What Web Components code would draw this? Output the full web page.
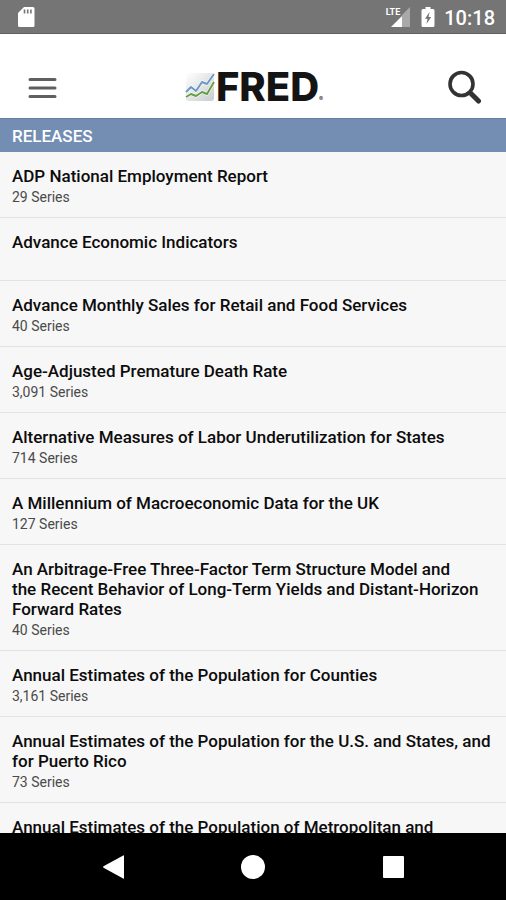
<!DOCTYPE html>
<html lang="en">
<head>
<meta charset="utf-8">
<meta name="viewport" content="width=device-width, initial-scale=1">
<title>FRED - Releases</title>
<style>
  body {
    margin: 0;
    font-family: Roboto, sans-serif;
    background: #fff;
  }
</style>
</head>
<body>
<fred-app></fred-app>

<script>
const RELEASES = [
  ["ADP National Employment Report", "29 Series"],
  ["Advance Economic Indicators", ""],
  ["Advance Monthly Sales for Retail and Food Services", "40 Series"],
  ["Age-Adjusted Premature Death Rate", "3,091 Series"],
  ["Alternative Measures of Labor Underutilization for States", "714 Series"],
  ["A Millennium of Macroeconomic Data for the UK", "127 Series"],
  ["An Arbitrage-Free Three-Factor Term Structure Model and the&nbsp;Recent Behavior of Long-Term Yields and Distant-Horizon Forward Rates", "40 Series"],
  ["Annual Estimates of the Population for Counties", "3,161 Series"],
  ["Annual Estimates of the Population for the U.S. and States, and for Puerto Rico", "73 Series"],
  ["Annual Estimates of the Population of Metropolitan and", ""]
];

class StatusBar extends HTMLElement {
  constructor() {
    super();
    this.attachShadow({ mode: "open" });
    this.shadowRoot.innerHTML = `
      <style>
        :host {
          display: flex;
          align-items: center;
          justify-content: space-between;
          height: 34px;
          padding: 0 11px 0 17px;
          box-sizing: border-box;
          background: #757575;
          border-bottom: 1px solid #5f5f5f;
          color: #fff;
        }
        svg { display: block; }
        .right { display: flex; align-items: center; }
        .signal { display: flex; align-items: flex-start; height: 20px; }
        .lte { font-size: 9px; line-height: 10px; font-weight: 700; }
        .signal svg { margin-left: -10px; }
        .battery { margin: 0 9px 0 11px; }
        time { font-size: 20px; line-height: 24px; font-weight: 500; padding-top: 2px; }
      </style>
      <svg width="18" height="22" viewBox="0 0 18 22" aria-hidden="true">
        <path fill="#fff" d="M7 1h9a1.500 1.500 0 0 1 1.500 1.500v17a1.500 1.500 0 0 1-1.500 1.500H2.500A1.500 1.500 0 0 1 1 19.500V7z"/>
        <path stroke="#757575" stroke-width="1.600" d="M7.500 3.500v4M10.700 3.500v4M13.900 3.500v4"/>
      </svg>
      <div class="right">
        <div class="signal">
          <span class="lte">LTE</span>
          <svg width="20" height="20" viewBox="0 0 20 20" aria-hidden="true">
            <path fill="#a9a9a9" d="M20 0v20H12V8z"/>
            <path fill="#fff" d="M12 9v11H1L11 10z"/>
          </svg>
        </div>
        <svg class="battery" width="14" height="22" viewBox="0 0 14 22" aria-hidden="true">
          <path fill="#fff" d="M4.500 1h5v2H12a1.500 1.500 0 0 1 1.500 1.500v15A1.500 1.500 0 0 1 12 21H2a1.500 1.500 0 0 1-1.500-1.500v-15A1.500 1.500 0 0 1 2 3h2.500z"/>
          <path fill="#757575" d="M8.500 6L4 12.700h2.500L5.500 18l4.700-7H7.600z"/>
        </svg>
        <time>10:18</time>
      </div>`;
  }
}

class FredLogo extends HTMLElement {
  constructor() {
    super();
    this.attachShadow({ mode: "open" });
    this.shadowRoot.innerHTML = `
      <style>
        :host { display: flex; align-items: center; }
        svg { display: block; margin-right: 1px; }
        .name { font: 800 40px/30px Inter, sans-serif; color: #141414; }
        .mark { align-self: flex-end; font: 6px/6px Inter, sans-serif; color: #222; }
      </style>
      <svg width="30" height="30" viewBox="0 0 30 30" aria-hidden="true">
        <defs>
          <linearGradient id="sheen" x1="0" y1="0" x2="1" y2="1">
            <stop offset="0" stop-color="#fff"/>
            <stop offset="1" stop-color="#c9cbce"/>
          </linearGradient>
        </defs>
        <rect x="1" y="1" width="28" height="28" rx="3" fill="url(#sheen)"/>
        <g fill="none" stroke-width="2" stroke-linejoin="round">
          <path stroke="#fff" stroke-width="3" d="M1 20l5-5 5 4 6-9 5 2 7-10"/>
          <path stroke="#6b97c2" d="M1 20l5-5 5 4 6-9 5 2 7-10"/>
          <path stroke="#fff" stroke-width="3" d="M1 25l5-3 5 2 6-4 5 2 7-12"/>
          <path stroke="#649e45" d="M1 25l5-3 5 2 6-4 5 2 7-12"/>
        </g>
      </svg>
      <span class="name">FRED</span><span class="mark">®</span>`;
  }
}

class AppHeader extends HTMLElement {
  constructor() {
    super();
    this.attachShadow({ mode: "open" });
    this.shadowRoot.innerHTML = `
      <style>
        :host {
          display: grid;
          grid-template-columns: 1fr auto 1fr;
          align-items: center;
          padding: 30px 24px 8px 26px;
          background: #fff;
        }
        button {
          display: block;
          border: 0;
          padding: 0;
          background: none;
          cursor: pointer;
        }
        .search { justify-self: end; }
        svg { display: block; }
      </style>
      <button type="button" aria-label="Menu">
        <svg width="32" height="46" viewBox="0 0 32 46">
          <path stroke="#606060" stroke-width="3" stroke-linecap="round" d="M4 15.500h25M4 24h25M4 32.500h25"/>
        </svg>
      </button>
      <slot></slot>
      <button type="button" class="search" aria-label="Search">
        <svg width="36" height="46" viewBox="0 0 36 46">
          <circle cx="15.500" cy="20" r="11.500" fill="none" stroke="#333" stroke-width="3.600"/>
          <path stroke="#333" stroke-width="5" stroke-linecap="round" d="M25.500 30l7 7"/>
          <path stroke="#333" stroke-width="3" d="M22.500 28l4 4"/>
        </svg>
      </button>`;
  }
}

class ReleaseItem extends HTMLElement {
  constructor() {
    super();
    this.attachShadow({ mode: "open" });
    this.shadowRoot.innerHTML = `
      <style>
        :host { display: block; border-bottom: 1px solid #e3e3e3; }
        a {
          display: block;
          min-height: 37px;
          padding: 14px 12px 11px;
          color: #0c0c0c;
          text-decoration: none;
        }
        .title { font-size: 17px; line-height: 20px; font-weight: 500; }
        ::slotted([slot=count]) {
          display: block;
          margin-top: 2px;
          font-size: 14px;
          line-height: 18px;
          color: #4a4a4a;
        }
      </style>
      <a href="#">
        <div class="title"><slot></slot></div>
        <slot name="count"></slot>
      </a>`;
  }
}

class ReleaseList extends HTMLElement {
  constructor() {
    super();
    this.attachShadow({ mode: "open" });
    this.shadowRoot.innerHTML = `
      <style>
        :host {
          display: flex;
          flex-direction: column;
          flex: 1;
          min-height: 0;
          background: #f7f7f7;
        }
        h2 {
          flex: none;
          margin: 0;
          padding: 8px 12px 6px;
          font-size: 17px;
          line-height: 20px;
          font-weight: 500;
          color: #fff;
          background: #738eb2;
          box-shadow: inset 0 1px #68809f;
        }
        .items {
          flex: 1;
          min-height: 0;
          overflow-y: auto;
          scrollbar-width: none;
        }
      </style>
      <h2><slot></slot></h2>
      <div class="items" role="list">${RELEASES.map(r => this._item(r)).join("")}</div>`;
  }

  _item([title, count]) {
    const series = count ? `<span slot="count">${count}</span>` : "";
    return `<release-item role="listitem">${title}${series}</release-item>`;
  }
}

class NavBar extends HTMLElement {
  constructor() {
    super();
    this.attachShadow({ mode: "open" });
    this.shadowRoot.innerHTML = `
      <style>
        :host {
          display: flex;
          flex: none;
          align-items: center;
          justify-content: center;
          gap: 23%;
          height: 67px;
          background: #000;
        }
        button { border: 0; padding: 0; background: none; cursor: pointer; }
        svg { display: block; fill: #fff; }
      </style>
      <button type="button" aria-label="Back">
        <svg width="24" height="24" viewBox="0 0 24 24"><path d="M23 .8v22.400q0 .8-.8.400L2.500 12.700q-1-.7 0-1.400L22.200.4q.8-.4.8.4z"/></svg>
      </button>
      <button type="button" aria-label="Home">
        <svg width="24" height="24" viewBox="0 0 24 24"><circle cx="12" cy="12" r="12"/></svg>
      </button>
      <button type="button" aria-label="Recent apps">
        <svg width="24" height="24" viewBox="0 0 24 24"><rect x="2" y="1" width="21" height="22" rx="1"/></svg>
      </button>`;
  }
}

class FredApp extends HTMLElement {
  constructor() {
    super();
    this.attachShadow({ mode: "open" });
    this.shadowRoot.innerHTML = `
      <style>
        :host { display: flex; flex-direction: column; height: 100vh; }
      </style>
      <status-bar></status-bar>
      <app-header><fred-logo></fred-logo></app-header>
      <release-list>RELEASES</release-list>
      <nav-bar></nav-bar>`;
  }
}

customElements.define("status-bar", StatusBar);
customElements.define("fred-logo", FredLogo);
customElements.define("app-header", AppHeader);
customElements.define("release-item", ReleaseItem);
customElements.define("release-list", ReleaseList);
customElements.define("nav-bar", NavBar);
customElements.define("fred-app", FredApp);
</script>
</body>
</html>
